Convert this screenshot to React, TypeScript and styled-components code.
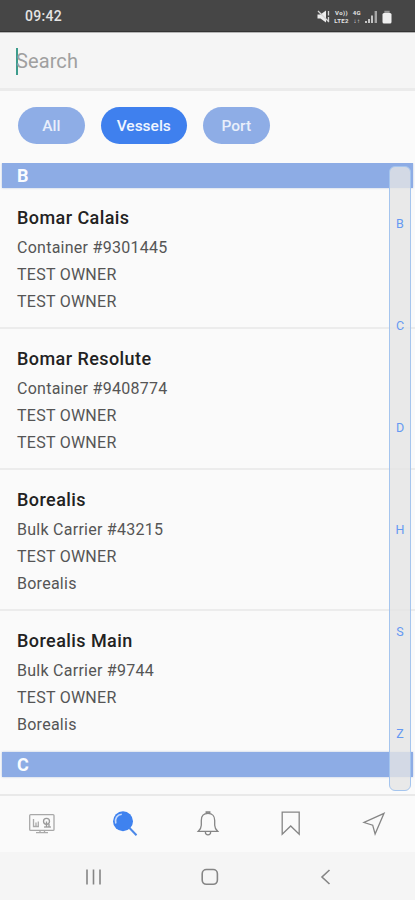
import React from 'react';
import styled, { createGlobalStyle } from 'styled-components';

const GlobalStyle = createGlobalStyle`
  * { box-sizing: border-box; }
  body { margin: 0; background: #fafafa; font-family: Roboto, "Liberation Sans", sans-serif; }
`;

const Screen = styled.div`
  display: flex;
  flex-direction: column;
  width: 415px;
  height: 900px;
  overflow: hidden;
  background: #fafafa;
`;

const StatusBar = styled.header`
  display: flex;
  flex: none;
  align-items: center;
  justify-content: space-between;
  height: 32px;
  padding: 0 23px 0 25px;
  background: #464646;
  border-bottom: 1px solid #333;
  color: #e4e4e4;
`;

const Clock = styled.span`
  font-size: 14px;
  font-weight: 500;
  letter-spacing: 0.3px;
  line-height: 32px;
`;

const SearchBar = styled.div`
  display: flex;
  flex: none;
  align-items: center;
  height: 59px;
  padding: 1px 16px 0;
  background: #f5f5f5;
  border-top: 1px solid #b5b5b5;
  border-bottom: 3px solid #ebebeb;
`;

const Caret = styled.span`
  width: 2px;
  height: 27px;
  margin-right: -2px;
  background: #3d9c8c;
`;

const Placeholder = styled.span`
  font-size: 20px;
  letter-spacing: 0.1px;
  color: #a0a0a0;
`;

const Filters = styled.div`
  display: flex;
  flex: none;
  gap: 16px;
  height: 72px;
  padding: 16px 18px 0;
`;

const Pill = styled.button<{ $active?: boolean; $wide?: boolean }>`
  width: ${({ $wide }) => ($wide ? 86.5 : 66.5)}px;
  height: 37px;
  padding: 1px 0 0;
  border: 0;
  border-radius: 19px;
  background: ${({ $active }) => ($active ? '#3f80ee' : '#8eade6')};
  color: ${({ $active }) => ($active ? '#f0f5ff' : '#e9effb')};
  font: 500 15.5px Roboto, sans-serif;
`;

const ListArea = styled.main`
  position: relative;
  flex: none;
  height: 631px;
  overflow: hidden;
`;

const SectionHeader = styled.h2`
  height: 25px;
  margin: 0 2px;
  padding: 0 15px;
  background: #8dace5;
  box-shadow: 0 0 2px #b9c6df;
  color: #fafcff;
  font-size: 18px;
  font-weight: 700;
  line-height: 25px;
`;

const Vessel = styled.article<{ $last?: boolean }>`
  height: ${({ $last }) => ($last ? 141 : 141)}px;
  padding: 15px 17px 0;
  border-bottom: ${({ $last }) => ($last ? '0' : '2px solid #ececec')};
`;

const VesselName = styled.h3`
  margin: 0 0 1px;
  color: #222;
  font-size: 18px;
  font-weight: 500;
  letter-spacing: 0.43px;
  line-height: 30px;
`;

const Detail = styled.p`
  margin: 0;
  color: #555;
  font-size: 16px;
  letter-spacing: 0.26px;
  line-height: 27.2px;
`;

const IndexRail = styled.nav`
  position: absolute;
  top: 3px;
  right: 4px;
  display: flex;
  flex-direction: column;
  width: 22px;
  height: 625px;
  padding: 5px 0 6px;
  border: 1px solid #a5c5ee;
  border-radius: 6px;
  background: rgba(229, 229, 229, 0.8);
`;

const IndexLetter = styled.span`
  display: flex;
  flex: 1;
  align-items: center;
  justify-content: center;
  color: #6599f2;
  font-size: 12.5px;
`;

const TabBar = styled.nav`
  display: grid;
  flex: none;
  grid-template-columns: repeat(5, 1fr);
  place-items: center;
  height: 58px;
  border-top: 2px solid #e9e9e9;
  background: #fafafa;
`;

const SystemBar = styled.footer`
  display: flex;
  flex: none;
  align-items: center;
  justify-content: space-between;
  height: 48px;
  padding: 2px 80px 0 84px;
  background: #f5f5f5;
`;

const Glyph = styled.svg`
  display: block;
  fill: none;
  stroke: #858585;
  stroke-width: 1.3;
`;

const StatusGlyphs = styled.div`
  display: flex;
  align-items: center;
  gap: 4px;
  height: 18px;
  margin-top: 2px;
`;

const Stacked = styled.span`
  display: flex;
  flex-direction: column;
  align-items: center;
  font-size: 6px;
  font-weight: 700;
  line-height: 7.5px;
  letter-spacing: 0.35px;
`;

const sections = ['B', 'C', 'D', 'H', 'S', 'Z'];

const vessels = [
  { name: 'Bomar Calais', lines: ['Container #9301445', 'TEST OWNER', 'TEST OWNER'] },
  { name: 'Bomar Resolute', lines: ['Container #9408774', 'TEST OWNER', 'TEST OWNER'] },
  { name: 'Borealis', lines: ['Bulk Carrier #43215', 'TEST OWNER', 'Borealis'] },
  { name: 'Borealis Main', lines: ['Bulk Carrier #9744', 'TEST OWNER', 'Borealis'] },
];

const StatusIcons = () => (
  <StatusGlyphs>
    <Glyph width="13" height="13" viewBox="0 0 13 13">
      <path d="M.5 4.5h3l5.5-4v12l-5.5-4h-3z" fill="#ececec" stroke="none" />
      <path d="M1 1l11 11M11.5 1v4.5M11.5 7v4" stroke="#d5d5d5" />
    </Glyph>
    <Stacked><span>Vo))</span><span>LTE2</span></Stacked>
    <Stacked><span>4G</span><span>↓↑</span></Stacked>
    <Glyph width="13" height="13" viewBox="0 0 13 13">
      <path d="M1 13v-2M4 13V9M7 13V5.5" stroke="#c5c5c5" strokeWidth="2" />
      <path d="M10.8 13V1" stroke="#a5a5a5" strokeWidth="2.4" />
    </Glyph>
    <Glyph width="10" height="14" viewBox="0 0 10 14">
      <path d="M3 3V1.5h4V3" fill="#999" stroke="#999" />
      <rect x=".5" y="3" width="9" height="10.5" rx="1.5" fill="#f0f0f0" stroke="none" />
    </Glyph>
  </StatusGlyphs>
);

const TabIcons = () => (
  <TabBar>
    <Glyph width="28" height="28" viewBox="0 0 28 28">
      <rect x="1.7" y="4.6" width="24.3" height="15.8" rx="1" stroke="#a8a8a8" />
      <path d="M5.5 9v7.5H11M8 16v-3.5M10.3 16V11.5M16 17h7M8 22.6h12M12 20.5v2M16.5 20.5v2" stroke="#aaa" />
      <circle cx="18.5" cy="11.3" r="3" stroke="#999" />
      <path d="M18.5 11.5V17M21 14v3" stroke="#999" />
    </Glyph>
    <Glyph width="28" height="28" viewBox="0 0 28 28">
      <circle cx="12" cy="11.3" r="10" fill="#3f82ef" stroke="none" />
      <path d="M18.3 17.8l7.2 7.4" stroke="#4b88e8" strokeWidth="2" />
      <path d="M4.8 13.5C3.5 8.6 6 4.8 10.8 4.2" stroke="#c7dbfc" strokeWidth="1.6" />
    </Glyph>
    <Glyph width="28" height="28" viewBox="0 0 28 28">
      <path d="M12.2 3.6V2h3.6v1.6M14 3.4c-4.4 0-6.7 3-6.7 7v4.8c0 2.8-1.2 4.3-3 6.1h19.4c-1.8-1.8-3-3.3-3-6.1v-4.8c0-4-2.3-7-6.7-7zM11.4 21.3v1c0 1.6 1 2.5 2.6 2.5s2.6-.9 2.6-2.5v-1" />
    </Glyph>
    <Glyph width="28" height="28" viewBox="0 0 28 28">
      <path d="M5.2 2.1h17v22.2L13.7 16l-8.5 8.3z" />
    </Glyph>
    <Glyph width="28" height="28" viewBox="0 0 28 28">
      <path d="M24 3.3L4 12.5l8.7 2.7 2.4 8.8z" />
    </Glyph>
  </TabBar>
);

const App = () => (
  <>
    <GlobalStyle />
    <Screen>
      <StatusBar>
        <Clock>09:42</Clock>
        <StatusIcons />
      </StatusBar>
      <SearchBar>
        <Caret />
        <Placeholder>Search</Placeholder>
      </SearchBar>
      <Filters>
        <Pill>All</Pill>
        <Pill $active $wide>Vessels</Pill>
        <Pill>Port</Pill>
      </Filters>
      <ListArea>
        <SectionHeader>B</SectionHeader>
        {vessels.map((vessel, index) => (
          <Vessel key={vessel.name} $last={index === vessels.length - 1}>
            <VesselName>{vessel.name}</VesselName>
            {vessel.lines.map((line, i) => <Detail key={i}>{line}</Detail>)}
          </Vessel>
        ))}
        <SectionHeader>C</SectionHeader>
        <IndexRail>
          {sections.map((letter) => <IndexLetter key={letter}>{letter}</IndexLetter>)}
        </IndexRail>
      </ListArea>
      <TabIcons />
      <SystemBar>
        <Glyph width="20" height="20" viewBox="0 0 20 20">
          <path d="M3 2.5v15M9.5 2.5v15M16 2.5v15" strokeWidth="1.6" />
        </Glyph>
        <Glyph width="20" height="20" viewBox="0 0 20 20">
          <rect x="2.2" y="2.5" width="15.2" height="14.8" rx="4.2" strokeWidth="1.6" />
        </Glyph>
        <Glyph width="20" height="20" viewBox="0 0 20 20">
          <path d="M14.5 3L7 10l7.5 7" strokeWidth="1.6" />
        </Glyph>
      </SystemBar>
    </Screen>
  </>
);

export default App;
